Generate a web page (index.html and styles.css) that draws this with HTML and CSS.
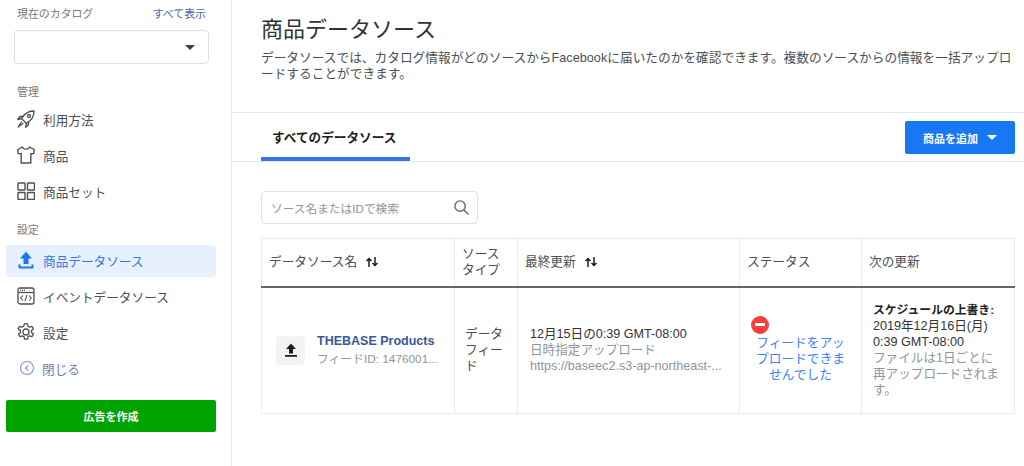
FILE: index.html
```html
<!DOCTYPE html>
<html lang="ja">
<head>
<meta charset="utf-8">
<title>商品データソース</title>
<link rel="stylesheet" href="styles.css">
</head>
<body>
<div class="app">
  <aside class="sidebar">
    <div class="cat-head"><span class="muted-label">現在のカタログ</span><a class="see-all">すべて表示</a></div>
    <div class="cat-select"><span class="caret dark"></span></div>
    <div class="section-label first">管理</div>
    <nav class="nav">
      <a class="nav-item"><svg class="ico" viewBox="0 0 18 18" fill="none" stroke="#4b4f56" stroke-width="1.300" stroke-linejoin="round" stroke-linecap="round"><path d="M6 6.500C8.500 3 12.500 1 17 1c0 4.500-2 8.500-5.500 11L9.500 13.500l-5-5z"/><circle cx="12" cy="6" r="1.500"/><path d="M6 6.500H3L.8 9.500l3.700-1M11.500 12v3l-3 2.200 1-3.700M4.500 12l-3.500 5 5-3.500"/></svg><span>利用方法</span></a>
      <a class="nav-item"><svg class="ico" viewBox="0 0 18 18" fill="none" stroke="#4b4f56" stroke-width="1.400" stroke-linejoin="round"><path d="M5.500 1 .8 3.500l.4 4 3 .300V17h9.600V7.800l3-.300.4-4L12.500 1C12 3.800 6 3.800 5.500 1z"/></svg><span>商品</span></a>
      <a class="nav-item"><svg class="ico" viewBox="0 0 18 18" fill="none" stroke="#4b4f56" stroke-width="1.400"><rect x="1" y="1" width="7" height="7" rx=".6"/><rect x="10.500" y="1" width="7" height="7" rx=".6"/><rect x="1" y="10.500" width="7" height="7" rx=".6"/><rect x="10.500" y="10.500" width="7" height="7" rx=".6"/></svg><span>商品セット</span></a>
    </nav>
    <div class="section-label">設定</div>
    <nav class="nav">
      <a class="nav-item active"><svg class="ico" viewBox="0 0 18 18" fill="#1877f2"><path d="M9 .8 15 7.500h-3.500V13h-5V7.500H3z"/><path d="M1.500 13.500h2V15.500h11V13.500h2V16c0 1-.6 1.500-1.500 1.500H3c-.9 0-1.500-.5-1.500-1.500z"/></svg><span>商品データソース</span></a>
      <a class="nav-item"><svg class="ico" viewBox="0 0 18 18" fill="none" stroke="#4b4f56" stroke-width="1.300"><rect x="1" y="1" width="16" height="16" rx="2"/><path d="M1 5.500h16"/><path d="M3 3.300h1M5 3.300h1M7 3.300h1" stroke-width="1.200"/><path d="M6 8.500l-2.300 2.500 2.300 2.500M12 8.500l2.300 2.500-2.300 2.500M10 8l-2 6" stroke-width="1.100"/></svg><span>イベントデータソース</span></a>
      <a class="nav-item"><svg class="ico" viewBox="0 0 18 18" fill="none" stroke="#4b4f56" stroke-width="1.300" stroke-linejoin="round"><circle cx="9" cy="9" r="3"/><path d="M7.500.8h3l.5 2.500 1.500.8 2.400-.8 1.500 2.600-1.900 1.700v1.800l1.900 1.700-1.500 2.600-2.400-.8-1.500.8-.5 2.500h-3l-.5-2.500-1.500-.8-2.400.8-1.500-2.600 1.900-1.700V7.600L1.100 5.900l1.500-2.600 2.400.8 1.500-.8z"/></svg><span>設定</span></a>
      <a class="nav-item close"><svg class="ico" viewBox="0 0 18 18" fill="none" stroke="#7b93c4" stroke-width="1.200"><circle cx="9" cy="9" r="7.300"/><path d="M10.300 6 7.300 9l3 3"/></svg><span>閉じる</span></a>
    </nav>
    <a class="create-ad">広告を作成</a>
  </aside>
  <main class="main">
    <header class="page-head">
      <h1>商品データソース</h1>
      <p>データソースでは、カタログ情報がどのソースからFacebookに届いたのかを確認できます。複数のソースからの情報を一括アップロードすることができます。</p>
    </header>
    <div class="tabbar">
      <a class="tab">すべてのデータソース</a>
      <a class="add-btn"><span>商品を追加</span><span class="caret white"></span></a>
    </div>
    <div class="content">
      <div class="search"><span>ソース名またはIDで検索</span><svg class="search-ico" viewBox="0 0 18 18" fill="none" stroke="#606770" stroke-width="1.500" stroke-linecap="round"><circle cx="7.500" cy="7.500" r="5.500"/><path d="M11.800 11.800 16 16"/></svg></div>
      <table class="grid">
        <colgroup><col class="c1"><col class="c2"><col class="c3"><col class="c4"><col class="c5"></colgroup>
        <thead>
          <tr>
            <th><span class="th-sort">データソース名<svg class="sort" viewBox="0 0 14 10" fill="none" stroke="#1c1e21" stroke-width="1.500"><path d="M4 10V1.500M1.500 4 4 1.500 6.500 4M10 0v8.500M7.500 6 10 8.500 12.500 6"/></svg></span></th>
            <th>ソース<br>タイプ</th>
            <th><span class="th-sort">最終更新<svg class="sort" viewBox="0 0 14 10" fill="none" stroke="#1c1e21" stroke-width="1.500"><path d="M4 10V1.500M1.500 4 4 1.500 6.500 4M10 0v8.500M7.500 6 10 8.500 12.500 6"/></svg></span></th>
            <th>ステータス</th>
            <th>次の更新</th>
          </tr>
        </thead>
        <tbody>
          <tr>
            <td class="name-cell">
              <div class="name-wrap">
                <span class="feed-ico"><svg viewBox="0 0 16 16" width="16" height="16" fill="#1c1e21"><path d="M8 1.500 13 7h-3v4.500H6V7H3z"/><path d="M2 13h12v1.800H2z"/></svg></span>
                <div class="name-text"><a class="feed-name">THEBASE Products</a><div class="feed-id">フィードID: 1476001...</div></div>
              </div>
            </td>
            <td class="type-cell">データフィード</td>
            <td class="upd-cell"><div class="dark-line">12月15日の0:39 GMT-08:00</div><div class="grey-line">日時指定アップロード</div><div class="grey-line nowrap">https://baseec2.s3-ap-northeast-...</div></td>
            <td class="status-cell"><span class="stop"></span><a class="status-link">フィードをアップロードできませんでした</a></td>
            <td class="next-cell"><strong>スケジュールの上書き:</strong><div>2019年12月16日(月)</div><div>0:39 GMT-08:00</div><div class="grey-line">ファイルは1日ごとに再アップロードされます。</div></td>
          </tr>
        </tbody>
      </table>
    </div>
  </main>
</div>
</body>
</html>
```
FILE: styles.css
```css
* { box-sizing: border-box; }
html, body { margin: 0; height: 100%; }
body {
  font-family: "Liberation Sans", "Noto Sans CJK JP", sans-serif;
  color: #1c1e21;
  background: #fff;
  overflow: hidden;
}
a { text-decoration: none; }
.app { display: flex; height: 466px; }
.sidebar {
  width: 232px;
  flex: none;
  border-right: 1px solid #e4e6eb;
  padding: 0 15px 0 6px;
}
.cat-head {
  display: flex;
  justify-content: space-between;
  padding: 7px 10px 0 11px;
  height: 30px;
  font-size: 10.900px;
  line-height: 15px;
}
.muted-label { color: #777; }
.see-all { color: #4a6ba8; }
.cat-select {
  margin: 0 7px 0 8px;
  height: 34px;
  border: 1px solid #dddfe2;
  border-radius: 4px;
  display: flex;
  align-items: center;
  justify-content: flex-end;
  padding: 0 13px 0 0;
}
.caret { width: 0; height: 0; border-left: 5px solid transparent; border-right: 5px solid transparent; border-top: 5px solid; }
.caret.dark { border-top-color: #3a3d42; }
.caret.white { border-top-color: #fff; }
.section-label {
  font-size: 10.900px;
  line-height: 16px;
  color: #777;
  padding-left: 11px;
  margin-top: 14px;
  height: 23px;
}
.section-label.first { margin-top: 20px; height: 20px; }
.nav { display: flex; flex-direction: column; gap: 4px; }
.nav-item {
  display: flex;
  align-items: center;
  gap: 8px;
  height: 32px;
  padding: 0 0 2px 12px;
  font-size: 12.650px;
  color: #4b4f56;
  border-radius: 4px;
}
.ico { width: 18px; height: 18px; flex: none; margin-left: -1px; }
.nav-item.active { background: #e7f0fe; color: #3578e5; }
.nav-item.close { color: #6c83b5; gap: 7px; }
.nav-item.close .ico { width: 16px; height: 16px; margin-left: 1px; }
.create-ad {
  display: flex;
  align-items: center;
  justify-content: center;
  height: 32px;
  margin-top: 15px;
  background: #00a400;
  border-radius: 2px;
  color: #fff;
  font-size: 11px;
  font-weight: 700;
}
.main { flex: 1; min-width: 0; }
.page-head {
  height: 113px;
  padding: 16px 10px 0 29px;
  border-bottom: 1px solid #e4e6eb;
}
.page-head h1 {
  margin: 0;
  font-size: 22px;
  line-height: 28px;
  font-weight: 400;
  color: #333;
}
.page-head p {
  margin: 6px 0 0;
  font-size: 12.700px;
  line-height: 16px;
  color: #4b4f56;
  line-break: anywhere;
}
.tabbar {
  height: 49px;
  border-bottom: 1px solid #e4e6eb;
  display: flex;
  justify-content: space-between;
  padding: 0 9px 0 29px;
}
.tab {
  width: 149px;
  height: 48px;
  border-bottom: 4px solid #3578e5;
  font-size: 12.650px;
  font-weight: 700;
  color: #1c1e21;
  padding: 16px 0 0 11px;
  line-height: 18px;
}
.add-btn {
  margin-top: 8px;
  width: 110px;
  height: 33px;
  background: #1877f2;
  border-radius: 2px;
  color: #fff;
  font-size: 11px;
  font-weight: 700;
  display: flex;
  align-items: center;
  justify-content: center;
  gap: 9px;
}
.content { padding: 29px 9px 0 29px; }
.search {
  width: 217px;
  height: 33px;
  border: 1px solid #dddfe2;
  border-radius: 4px;
  display: flex;
  align-items: center;
  justify-content: space-between;
  padding: 0 7px 0 9px;
  font-size: 11.700px;
  color: #90949c;
}
.search-ico { width: 17px; height: 17px; }
.grid {
  margin-top: 14px;
  width: 753px;
  table-layout: fixed;
  border-collapse: collapse;
  border: 1px solid #e9eaed;
}
.c1 { width: 193px; }
.c2 { width: 63px; }
.c3 { width: 222px; }
.c4 { width: 122px; }
.c5 { width: 153px; }
.grid th {
  height: 48px;
  border-right: 1px solid #e9eaed;
  border-bottom: 2px solid #606770;
  padding: 0 7px;
  text-align: left;
  font-size: 12.700px;
  line-height: 16px;
  font-weight: 400;
  color: #4b4f56;
}
.th-sort { display: inline-flex; align-items: center; gap: 8px; }
.sort { width: 14px; height: 10px; }
.grid td {
  height: 127px;
  border-right: 1px solid #e9eaed;
  padding: 0 7px;
  font-size: 12.700px;
  line-height: 16px;
  vertical-align: middle;
}
.name-cell.name-cell { padding-left: 14px; padding-right: 0; }
.name-wrap { display: flex; align-items: center; gap: 12px; }
.feed-ico {
  width: 29px; height: 29px; flex: none;
  background: #f2f3f5; border-radius: 4px;
  display: flex; align-items: center; justify-content: center;
}
.name-text { min-width: 0; }
.feed-name { font-size: 12.500px; font-weight: 700; color: #365899; display: block; line-height: 16px; margin-bottom: 2px; }
.feed-id { font-size: 11.800px; color: #90949c; line-height: 16px; white-space: nowrap; }
.type-cell.type-cell { padding: 0 10px; color: #4b4f56; }
.upd-cell.upd-cell { padding: 0 12px; font-size: 12.600px; }
.dark-line { color: #333; }
.grey-line { color: #90949c; }
.nowrap { white-space: nowrap; }
.status-cell.status-cell { padding: 0 10px 2px; text-align: center; }
.stop {
  display: block;
  width: 18px; height: 18px;
  margin: 0 0 1px 1px;
  border-radius: 50%;
  background: #fa3e3e;
  position: relative;
}
.stop::after {
  content: "";
  position: absolute;
  left: 4px; right: 4px; top: 7.500px; height: 3px;
  background: #fff;
}
.status-link { color: #4080ff; display: block; }
.next-cell.next-cell { padding: 0 11px; font-size: 12.600px; color: #333; }
.next-cell strong { display: block; color: #1c1e21; font-size: 11.800px; }
```
